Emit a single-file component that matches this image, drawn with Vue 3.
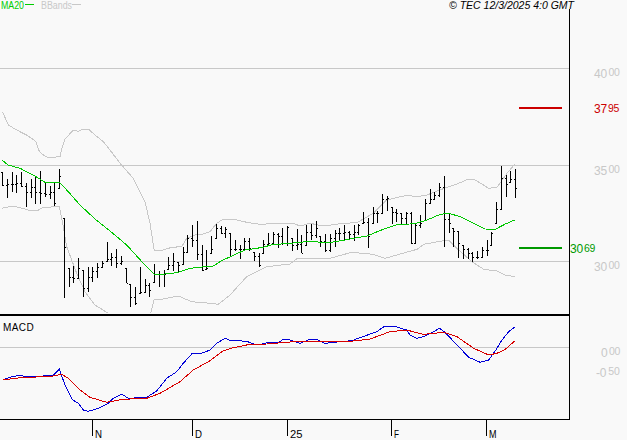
<script setup>
import { computed } from 'vue'

// [high, low, close], read off at 3x, so y = top + v / 3
const barsA = [[66,108,104],[88,145,103],[66,125,102],[75,128,98],[66,112,108],[100,170,125],[88,145,110],[78,162,125],[63,162,130],[95,140,132],[108,148,125],[97,167,160],[57,115,78],[205,443,292],[355,410,382],[348,398,385],[325,385,355],[360,440,415],[352,425,380],[350,395,362],[340,385,352],[332,355,340],[277,332,328],[310,348,320],[298,355,340],[317,345,332],[355,400,398],[403,470,440],[410,465,460],[352,430,425],[388,425,405],[398,440,420],[343,395,372],[362,410,372],[360,410,372],[322,358,345],[308,362,332],[335,367,345],[290,342,305],[255,307,265],[225,290,270],[212,330,312],[285,362,360],[300,358,355]]
const barsB = [[198,250,238],[162,203,175],[168,192,188],[172,203,178],[190,262,238],[210,242,238],[225,268,238],[205,242,212],[205,242,235],[245,273,258],[250,290,285],[210,250,222],[188,225,218],[186,222,192],[190,235,198],[175,225,218],[168,228,172],[205,242,225],[178,240,222],[195,250,248],[165,225,185],[162,210,195],[153,205,175],[198,232,212],[193,247,240],[192,245,205],[180,232,188],[175,212,188],[165,212,185],[183,208,192],[165,212,185],[162,195,165],[127,160,155],[143,233,198],[112,158,128],[122,160,128],[72,130,88],[78,122,85],[110,162,125],[117,155,130],[130,162,145],[125,163,128],[127,222,220],[158,220,165]]
const barsC = [[465,503,490],[418,480,430],[388,430,418],[395,418,405],[368,412,382],[348,560,478],[460,520,488],[505,560,512],[513,595,550],[555,597,568],[565,597,580],[575,607,592],[572,597,592],[562,590,570],[540,587,570],[515,555,520],[427,490,448],[318,450,355],[345,410,372],[333,365,358],[328,415,385]]

function rows(list, top) {
  return list.map(([h, l, c]) => [top + h / 3, top + l / 3, top + c / 3])
}

const bars = computed(() => {
  const all = [...rows(barsA, 150), ...rows(barsB, 170), ...rows(barsC, 60)]
  return all.map((b, i) => {
    const prev = i ? all[i - 1][2] : b[0]
    const open = Math.min(b[1], Math.max(b[0], prev))
    return { x: Math.round(2 + 4.75 * i) + 0.5, hi: b[0], lo: b[1], open: Math.round(open) + 0.5, close: Math.round(b[2]) + 0.5 }
  })
})

function pts(list, left, top) {
  const out = []
  for (let i = 0; i < list.length; i += 2) {
    out.push((left + list[i] / 3).toFixed(1) + ',' + (top + list[i + 1] / 3).toFixed(1))
  }
  return out
}

const ma20 = [
  ...pts([5,30,25,45,60,55,100,75,135,97,178,97,205,125,240,165,285,207,320,235,380,285,430,340,463,372,495,372,530,368,570,355,600,352], 0, 150),
  ...pts([0,288,10,288,35,272,70,256,105,240,160,232,185,224,240,220,280,216,300,213,330,217,365,217,400,211,430,205,470,198,520,178,565,163,600,162], 210, 170),
  ...pts([0,489,30,480,70,463,95,460,130,470,165,488,205,507,235,508,265,492,293,480], 417, 60),
].join(' ')

const bandUp = [
  ...pts([8,337,25,375,50,390,85,408,108,425,116,450], 0, 0),
  ...pts([125,12,145,23,180,20], 0, 150),
  ...pts([186,445,195,418,220,390,235,394,250,387,265,387,285,405,310,425,330,450], 0, 0),
  ...pts([360,40,400,85,435,155,450,220,463,303,490,300,515,292,545,290,560,265,590,253,610,252], 0, 150),
  ...pts([0,185,20,160,40,147,70,147,110,157,150,163,210,160,250,160,270,168,300,160,340,168,400,160,440,158,490,130,530,90,590,76], 210, 170),
  ...pts([0,410,30,405,90,382,120,372,155,357,175,360,215,385,240,382,270,340,293,313], 417, 60),
].join(' ')

const bandLowA = pts([5,175,40,168,85,180,110,183,130,172,178,170,190,230,200,290,230,370,255,425,285,465,325,490], 0, 150).join(' ')
const bandLowB = [
  ...pts([452,490,463,448,490,447,535,438,575,455,610,458], 0, 150),
  ...pts([0,400,25,403,60,375,110,320,170,290,240,282,262,265,360,265,425,247,490,253,525,265,560,255], 210, 170),
  ...pts([0,568,20,553,75,543,95,540,125,570,165,605,200,628,240,633,265,645,293,650], 417, 60),
].join(' ')

const macd = [
  ...pts([8,210,35,200,60,196,80,201,130,198,160,195,178,178,195,225,218,270,235,280,250,300,265,304,295,295,325,280,340,265,365,253,388,266,415,262,440,262,470,243,500,205,530,185,550,160,575,132,605,130], 0, 310),
  ...pts([0,120,20,100,45,85,60,91,110,94,125,100,145,105,175,97,205,98,220,88,240,90,270,100,300,88,320,88,345,100,380,96,425,92,470,76,500,65,525,48,550,48,590,60,600,75], 210, 310),
  ...pts([0,85,25,78,68,55,85,68,125,110,155,142,190,157,215,150,240,115,255,90,275,65,293,51], 417, 310),
].join(' ')

const signal = [
  ...pts([8,210,60,203,130,200,160,198,185,193,205,205,240,240,270,262,320,277,370,268,440,265,480,250,540,215,580,180], 0, 310),
  ...pts([0,152,40,122,70,113,120,103,170,102,240,96,300,93,430,93,480,87,540,65,590,60], 210, 310),
  ...pts([0,68,20,73,60,69,85,68,120,80,170,115,215,135,240,130,265,118,293,93], 417, 310),
].join(' ')

const gridY = [68.5, 165.5, 261.5, 347.5]

const prices = [
  { y: 78, big: '40', small: '00' },
  { y: 175, big: '35', small: '00' },
  { y: 271, big: '30', small: '00' },
]

const months = [
  { x: 92.5, label: 'N', w: 7 },
  { x: 192.5, label: 'D', w: 7 },
  { x: 287.5, label: '25', w: 12.5 },
  { x: 391.5, label: 'F', w: 5 },
  { x: 486.5, label: 'M', w: 7.5 },
]
</script>

<template>
  <div class="chart">
    <svg width="627" height="440" viewBox="0 0 627 440">
      <!-- grid -->
      <line v-for="y in gridY" :key="y" class="grid" x1="0" x2="569" :y1="y" :y2="y" />

      <!-- bollinger -->
      <polyline class="band" :points="bandUp" />
      <polyline class="band" :points="bandLowA" />
      <polyline class="band" :points="bandLowB" />

      <!-- price bars -->
      <g v-for="(b, i) in bars" :key="i" class="bar">
        <line :x1="b.x" :x2="b.x" :y1="b.hi" :y2="b.lo" />
        <line :x1="b.x - 1.5" :x2="b.x" :y1="b.open" :y2="b.open" />
        <line :x1="b.x" :x2="b.x + 1.5" :y1="b.close" :y2="b.close" />
      </g>

      <polyline class="ma" :points="ma20" />

      <!-- targets -->
      <rect class="target-up" x="519" y="107" width="43" height="2" />
      <rect class="target-down" x="519" y="247" width="43" height="2" />

      <!-- macd -->
      <polyline class="macd" :points="macd" />
      <polyline class="signal" :points="signal" />

      <!-- frame -->
      <rect class="frame" x="0" y="314" width="569" height="2" />
      <rect class="frame" x="0" y="419" width="570" height="1" />
      <rect class="frame" x="569" y="9" width="1" height="411" />
      <g v-for="m in months" :key="m.label">
        <line class="tick" :x1="m.x" :x2="m.x" y1="419" y2="436" />
        <text class="month" :x="m.x + 2.5" y="437.5" :textLength="m.w" lengthAdjust="spacingAndGlyphs">{{ m.label }}</text>
      </g>

      <!-- legend -->
      <text class="legend green" x="1" y="9.2" textLength="23" lengthAdjust="spacingAndGlyphs">MA20</text>
      <rect class="target-ma" x="25" y="4" width="9" height="1" />
      <text class="legend gray" x="41" y="9.2" textLength="31" lengthAdjust="spacingAndGlyphs">BBands</text>
      <rect class="band-key" x="72" y="4" width="9" height="1" />
      <text class="stamp" x="449" y="9.2" textLength="125" lengthAdjust="spacingAndGlyphs">© TEC 12/3/2025 4:0 GMT</text>
      <text class="macd-label" x="3" y="331">MACD</text>

      <!-- right axis -->
      <text v-for="p in prices" :key="p.big" class="price gray" x="594" :y="p.y">{{ p.big }}<tspan class="cents" dx="1.5" dy="-2">{{ p.small }}</tspan></text>
      <text class="price red" x="594" y="113">37<tspan class="cents" dx="1" dy="-1">95</tspan></text>
      <text class="price dgreen" x="570" y="253">30<tspan class="cents" dx="1" dy="-1">69</tspan></text>
      <text class="price gray" x="601" y="357">0<tspan class="cents" dx="1.5" dy="-2">00</tspan></text>
      <text class="price gray" x="596" y="377">-0<tspan class="cents" dx="2" dy="-2">50</tspan></text>
    </svg>
  </div>
</template>

<style>
html, body { background: #f9f9f9; }
</style>

<style scoped>
.chart {
  width: 627px;
  height: 440px;
  overflow: hidden;
  background: #f9f9f9;
}
svg { display: block; font-family: "Liberation Sans", Arial, sans-serif; }
.grid { stroke: #c8c8c8; stroke-width: 1; shape-rendering: crispEdges; }
polyline { fill: none; stroke-width: 1; shape-rendering: crispEdges; }
.band { stroke: #c8c8c8; }
.ma { stroke: #00c800; }
.macd { stroke: #0000d8; }
.signal { stroke: #d80000; }
.bar line { stroke: #000; stroke-width: 1; shape-rendering: crispEdges; }
.target-up { fill: #cc0000; }
.target-down { fill: #009900; }
.target-ma { fill: #00cc00; }
.band-key { fill: #c8c8c8; }
.frame { fill: #000; }
.tick { stroke: #000; stroke-width: 1; shape-rendering: crispEdges; }
.month { font-size: 11.5px; fill: #000; }
.legend { font-size: 10px; }
.green { fill: #00cc00; }
.gray { fill: #c8c8c8; }
.red { fill: #cc0000; }
.dgreen { fill: #009900; }
.stamp { font-size: 10px; font-style: italic; fill: #000; }
.macd-label { font-size: 10px; fill: #000; letter-spacing: 0.4px; }
.price { font-size: 12px; letter-spacing: -0.2px; }
.cents { font-size: 10.5px; }
</style>
